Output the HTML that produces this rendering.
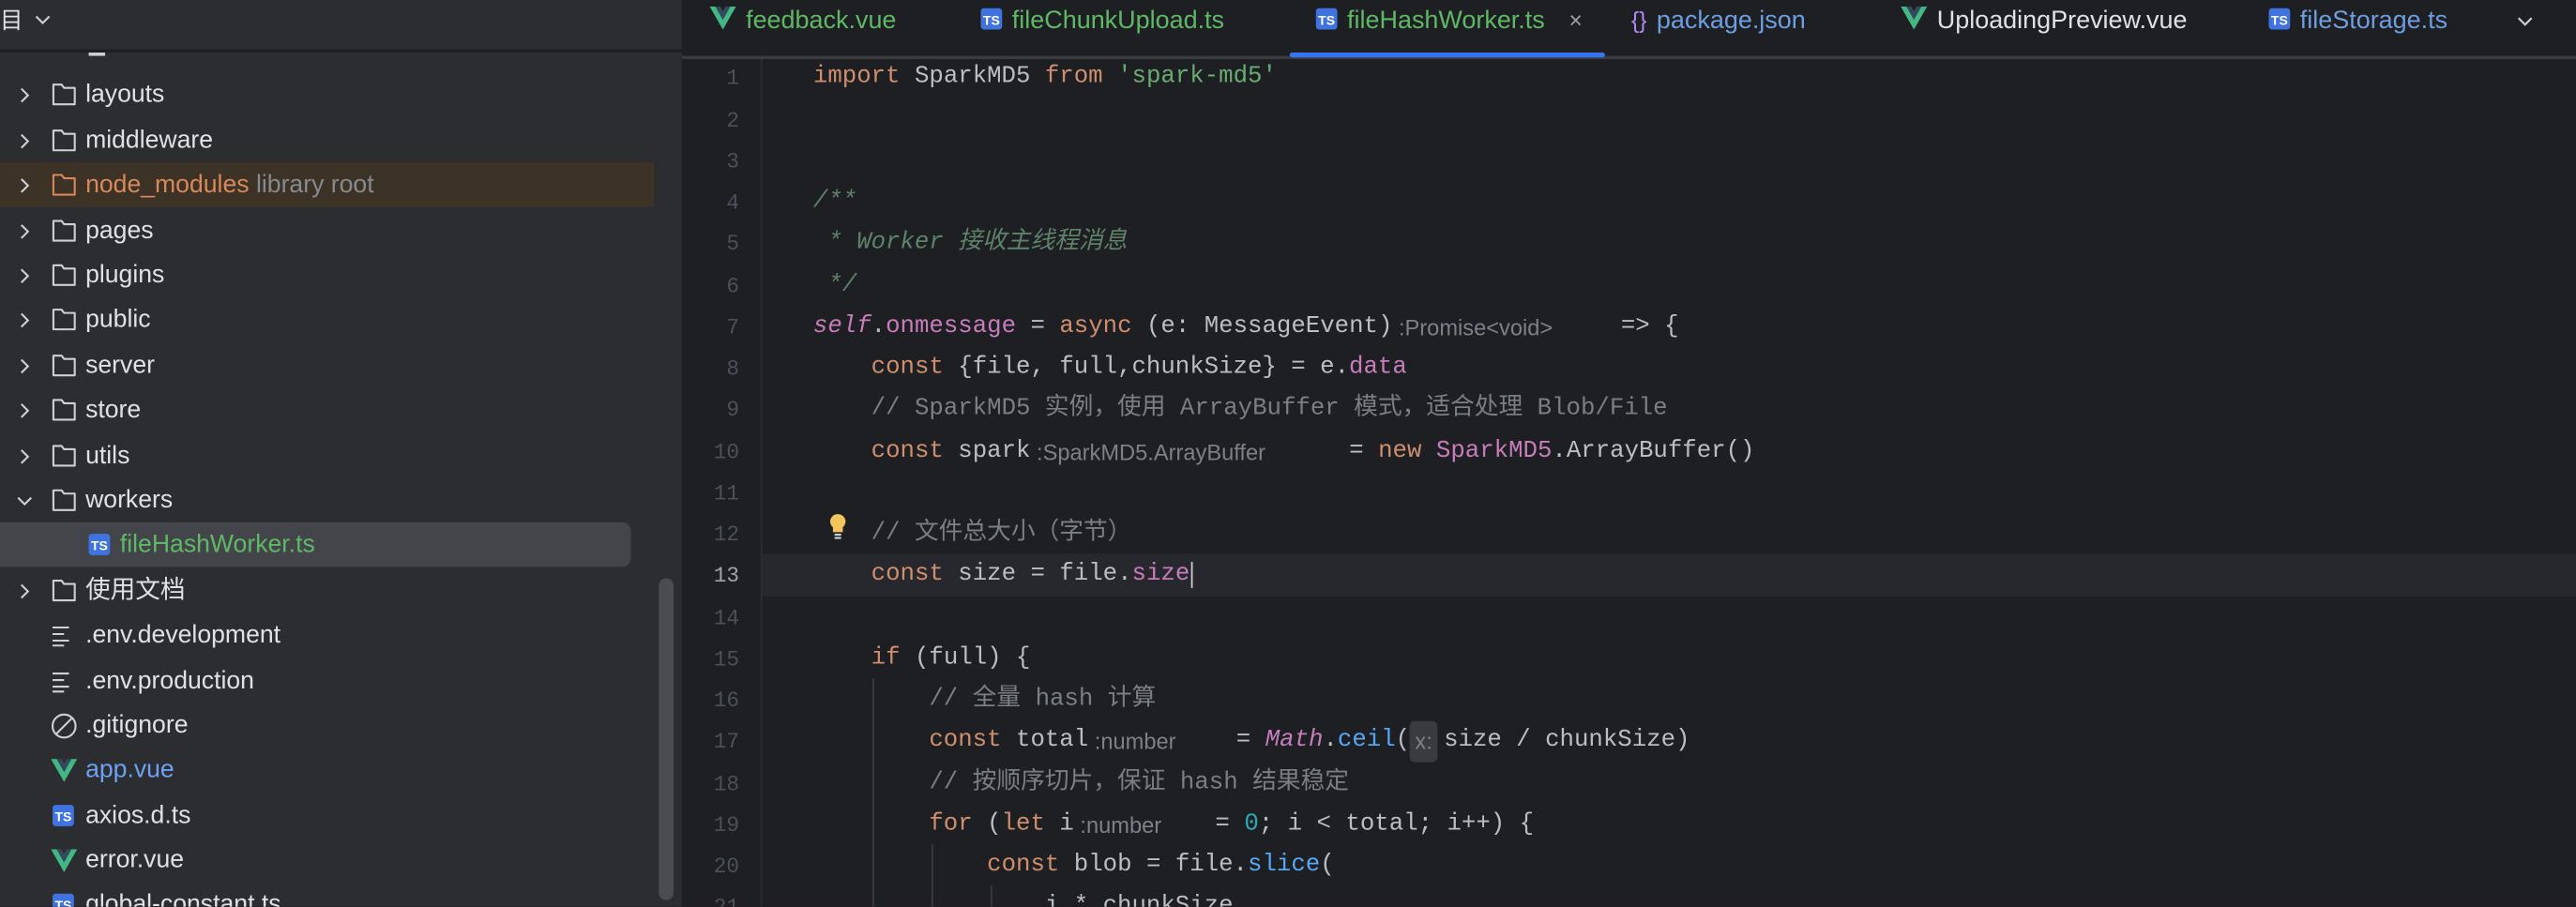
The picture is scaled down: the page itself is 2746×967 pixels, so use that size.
<!DOCTYPE html>
<html><head><meta charset="utf-8"><style>
html,body{margin:0;padding:0;width:2746px;height:966px;overflow:hidden;background:#1e1f22;}
#w{position:absolute;left:0;top:0;width:1568px;height:552px;transform:scale(1.75128);transform-origin:0 0;overflow:hidden;font-family:"Liberation Sans","Noto Sans CJK SC",sans-serif;}
#side{position:absolute;left:0;top:0;width:415px;height:552px;background:#2b2d30;}
#ed{position:absolute;left:415px;top:0;width:1153px;height:552px;background:#1e1f22;}
.row{position:absolute;left:0;height:27px;line-height:28px;font-size:15.2px;color:#dfe1e5;white-space:nowrap;}
.chev{position:absolute;left:9px;top:8px;}
.fold{position:absolute;left:31px;top:6px;}
.txt{position:absolute;left:52px;}
.ln{position:absolute;left:0;width:450px;text-align:right;font-family:"Liberation Mono",monospace;font-size:13px;color:#4b5059;}
.cl{position:absolute;left:495px;white-space:pre;font-family:"Liberation Mono","Noto Sans CJK SC",monospace;font-size:14.7px;color:#bcbec4;}
.k{color:#cf8e6d}.s{color:#6aab73}.c{color:#7a7e85}.d{color:#5f826b;font-style:italic}.p{color:#c77dbb}.i{font-style:italic}.f{color:#56a8f5}.n{color:#2aacb8}
.h{display:inline-block;font-family:"Liberation Sans",sans-serif;font-size:13.5px;color:#7d8088;vertical-align:top;}
.tab{position:absolute;top:0;height:25px;line-height:25px;font-size:15.4px;white-space:nowrap;}
.ts{display:inline-block;width:13px;height:13px;background:#3f74e0;border-radius:2px;color:#fff;font-size:8px;line-height:15px;text-align:center;font-weight:bold;vertical-align:middle;margin-top:-3px;}
</style></head><body><div id="w">
<div id="side">
 <div style="position:absolute;left:0;top:2px;font-size:14px;color:#dfe1e5;">目</div>
 <svg style="position:absolute;left:20px;top:7px" width="12" height="10"><path d="M2 3l4 4 4-4" stroke="#ced0d6" stroke-width="1.2" fill="none"/></svg>
 <div style="position:absolute;left:0;top:30px;width:415px;height:2px;background:#1e1f22"></div>
 <div style="position:absolute;left:54px;top:32px;width:10px;height:2px;background:#ced0d6"></div>
 <div style="position:absolute;left:0;top:99px;width:398px;height:27px;background:#3c3225"></div>
 <div style="position:absolute;left:0;top:318px;width:384px;height:27px;background:#43454a;border-radius:0 5px 5px 0"></div>
 <div style="position:absolute;left:401px;top:352px;width:9px;height:196px;background:#4a4c50;border-radius:5px"></div>
 <div id="tree"></div>
</div>
<div id="ed">
 <div style="position:absolute;left:0;top:34px;width:1153px;height:2px;background:#393b40"></div>
 <div style="position:absolute;left:370px;top:32px;width:192px;height:3px;background:#3574f0;border-radius:2px"></div>
 <div style="position:absolute;left:48px;top:337px;width:1105px;height:26px;background:#26282e"></div>
 <div style="position:absolute;left:48px;top:36px;width:1px;height:516px;background:#2b2d30"></div>
</div>
<div id="abs"></div>
</div>
<script>
var W=document.getElementById('w'),out='';
function chev(open){return open?'<svg class="chev" width="12" height="12"><path d="M2 4l4 4 4-4" stroke="#ced0d6" stroke-width="1.2" fill="none"/></svg>':'<svg class="chev" width="12" height="12"><path d="M4 2l4 4-4 4" stroke="#ced0d6" stroke-width="1.2" fill="none"/></svg>';}
function folder(c){return '<svg class="fold" width="16" height="15"><path d="M1.5 1.5h5l1.5 2h6.5v10h-13z" stroke="'+c+'" stroke-width="1.2" fill="none" stroke-linejoin="round"/></svg>';}
var vue='<svg width="16" height="14" style="position:absolute;left:31px;top:7px"><path d="M0 0h3.5l4.5 8 4.5-8h3.5l-8 14z" fill="#41b883"/><path d="M3.5 0h3l1.5 3 1.5-3h3l-4.5 8z" fill="#35495e"/></svg>';
function ts(l){return '<span class="ts" style="position:absolute;left:'+l+'px;top:7px;margin:0">TS</span>';}
var rows=[[57,'f','layouts'],[85,'f','middleware'],[112,'nm','node_modules'],[140,'f','pages'],[167,'f','plugins'],[194,'f','public'],[222,'f','server'],[249,'f','store'],[277,'f','utils'],[304,'o','workers'],[331,'tsc','fileHashWorker.ts'],[359,'f','使用文档'],[386,'t','.env.development'],[414,'t','.env.production'],[441,'g','.gitignore'],[468,'v','app.vue','#6ca1f3'],[496,'ts','axios.d.ts'],[523,'v','error.vue'],[550,'ts','global-constant.ts']];
rows.forEach(function(r){var y=r[0]-13.5,h='',t=r[1];
 if(t=='f')h=chev(0)+folder('#ced0d6')+'<span class="txt">'+r[2]+'</span>';
 else if(t=='o')h=chev(1)+folder('#ced0d6')+'<span class="txt">'+r[2]+'</span>';
 else if(t=='nm')h=chev(0)+folder('#d8885a')+'<span class="txt" style="color:#d8885a">'+r[2]+' <span style="color:#868a91">library root</span></span>';
 else if(t=='tsc')h=ts(54)+'<span class="txt" style="left:73px;color:#5fb865">'+r[2]+'</span>';
 else if(t=='t')h='<svg width="16" height="14" style="position:absolute;left:31px;top:7px"><path d="M1 2h10M1 6h7M1 10h10M1 13h7" stroke="#ced0d6" stroke-width="1.2"/></svg><span class="txt">'+r[2]+'</span>';
 else if(t=='g')h='<svg width="16" height="16" style="position:absolute;left:31px;top:6px"><circle cx="8" cy="8" r="7" stroke="#ced0d6" stroke-width="1.2" fill="none"/><path d="M3 13L13 3" stroke="#ced0d6" stroke-width="1.2"/></svg><span class="txt">'+r[2]+'</span>';
 else if(t=='v')h=vue+'<span class="txt"'+(r[3]?' style="color:'+r[3]+'"':'')+'>'+r[2]+'</span>';
 else if(t=='ts')h=ts(32)+'<span class="txt">'+r[2]+'</span>';
 out+='<div class="row" style="top:'+y+'px;width:415px">'+h+'</div>';});
var tabs=[[432,'v','feedback.vue','#5fb865'],[597,'t','fileChunkUpload.ts','#5fb865'],[801,'t','fileHashWorker.ts','#5fb865'],[993,'j','package.json','#6c9ee0'],[1157,'v','UploadingPreview.vue','#dfe1e5'],[1381,'t','fileStorage.ts','#6c9ee0']];
tabs.forEach(function(t){var ic='';
 if(t[1]=='v')ic='<svg width="16" height="14" style="vertical-align:middle;margin-top:-3px"><path d="M0 0h3.5l4.5 8 4.5-8h3.5l-8 14z" fill="#41b883"/><path d="M3.5 0h3l1.5 3 1.5-3h3l-4.5 8z" fill="#35495e"/></svg>';
 else if(t[1]=='t')ic='<span class="ts">TS</span>';
 else ic='<span style="color:#b189f5;font-size:14px">{}</span>';
 out+='<div class="tab" style="left:'+t[0]+'px;color:'+t[3]+'">'+ic+'<span style="margin-left:6px">'+t[2]+'</span></div>';});
out+='<div class="tab" style="left:955px;color:#9da0a8;font-size:14px">×</div>';
out+='<svg style="position:absolute;left:1531px;top:8px" width="12" height="10"><path d="M2 3l4 4 4-4" stroke="#ced0d6" stroke-width="1.2" fill="none"/></svg>';
function H(w,t){return '<span class="h" style="width:'+w+'px">'+t+'</span>';}
var code=['<span class="k">import</span> SparkMD5 <span class="k">from</span> <span class="s">\'spark-md5\'</span>','','',
'<span class="d">/**</span>','<span class="d"> * Worker 接收主线程消息</span>','<span class="d"> */</span>',
'<span class="p i">self</span>.<span class="p">onmessage</span> = <span class="k">async</span> (e: MessageEvent)'+H(139,'&nbsp;:Promise&lt;void&gt;')+'=&gt; {',
'    <span class="k">const</span> {file, full,chunkSize} = e.<span class="p">data</span>',
'    <span class="c">// SparkMD5 实例，使用 ArrayBuffer 模式，适合处理 Blob/File</span>',
'    <span class="k">const</span> spark'+H(194,'&nbsp;:SparkMD5.ArrayBuffer')+'= <span class="k">new</span> <span class="p">SparkMD5</span>.ArrayBuffer()',
'',
'    <span class="c">// 文件总大小（字节）</span>',
'    <span class="k">const</span> size = file.<span class="p">size</span><span style="border-left:1.5px solid #ced0d6;margin-left:1px"></span>',
'',
'    <span class="k">if</span> (full) {',
'        <span class="c">// 全量 hash 计算</span>',
'        <span class="k">const</span> total'+H(90,'&nbsp;:number')+'= <span class="p i">Math</span>.<span class="f">ceil</span>(<span class="h" style="background:#393b40;border-radius:3px;padding:0 3px;margin-right:4px">x:</span>size / chunkSize)',
'        <span class="c">// 按顺序切片，保证 hash 结果稳定</span>',
'        <span class="k">for</span> (<span class="k">let</span> i'+H(86,'&nbsp;:number')+'= <span class="n">0</span>; i &lt; total; i++) {',
'            <span class="k">const</span> blob = file.<span class="f">slice</span>(',
'                i * chunkSize,'];
code.forEach(function(c,i){var y=35.4+i*25.25;
 out+='<div class="ln" style="top:'+y+'px;height:25px;line-height:25px;'+(i==12?'color:#a1a3ab':'')+'">'+(i+1)+'</div>';
 out+='<div class="cl" style="top:'+y+'px;height:25px;line-height:25px">'+c+'</div>';});
out+='<div style="position:absolute;left:531px;top:413px;width:1px;height:139px;background:#393b40"></div>';
out+='<div style="position:absolute;left:567px;top:514px;width:1px;height:38px;background:#393b40"></div>';
out+='<div style="position:absolute;left:603px;top:539px;width:1px;height:13px;background:#393b40"></div>';
out+='<svg style="position:absolute;left:503px;top:312px" width="14" height="18"><path d="M7 1a4.5 4.5 0 0 0-3 8v3h6V9a4.5 4.5 0 0 0-3-8z" fill="#f2c55c"/><path d="M5 13.5h4M5 15.5h4" stroke="#ced0d6" stroke-width="1.2"/></svg>';
document.getElementById('abs').innerHTML=out;
</script>
</div></body></html>
